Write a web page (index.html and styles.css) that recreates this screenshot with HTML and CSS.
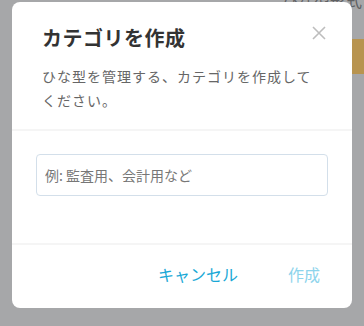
FILE: index.html
```html
<!DOCTYPE html>
<html lang="ja">
<head>
<meta charset="utf-8">
<link rel="stylesheet" href="styles.css">
</head>
<body>
<div class="backdrop">
  <span class="bg-text">ひな型形式</span>
  <div class="bg-button"></div>
  <div class="modal">
    <div class="modal-header">
      <h2 class="modal-title">カテゴリを作成</h2>
      <p class="modal-desc">ひな型を管理する、カテゴリを作成してください。</p>
      <button class="close-btn" aria-label="閉じる">
        <svg width="14" height="14" viewBox="0 0 14 14"><path d="M1 1L13 13M13 1L1 13" stroke="#bdbdbd" stroke-width="1.6" fill="none"/></svg>
      </button>
    </div>
    <div class="modal-body">
      <input class="text-input" type="text" placeholder="例: 監査用、会計用など">
    </div>
    <div class="modal-footer">
      <button class="btn btn-cancel">キャンセル</button>
      <button class="btn btn-create">作成</button>
    </div>
  </div>
</div>
</body>
</html>
```
FILE: styles.css
```css
html, body {
  margin: 0;
  padding: 0;
}
body {
  width: 364px;
  height: 326px;
  overflow: hidden;
  background: #a6a7a9;
  font-family: "Noto Sans CJK JP", "Noto Sans", sans-serif;
}
.backdrop {
  position: relative;
  width: 364px;
  height: 326px;
  padding-top: 2px;
  box-sizing: border-box;
}
.bg-text {
  position: absolute;
  right: 2px;
  top: -12px;
  font-size: 16px;
  color: #5f6062;
}
.bg-button {
  position: absolute;
  left: 352px;
  top: 39px;
  width: 20px;
  height: 35px;
  background: #b8944f;
}
.modal {
  position: relative;
  margin: 0 12px;
  width: 340px;
  height: 306px;
  background: #fff;
  border-radius: 8px;
  display: flex;
  flex-direction: column;
}
.modal-header {
  position: relative;
  padding: 22px 30px 17px;
  border-bottom: 2px solid #f5f5f5;
}
.modal-title {
  margin: 0;
  font-size: 20px;
  line-height: 28px;
  font-weight: 700;
  color: #333;
  letter-spacing: 0.5px;
}
.modal-desc {
  margin: 12px 0 0;
  font-size: 14px;
  line-height: 24px;
  color: #666;
  letter-spacing: 1px;
}
.close-btn {
  position: absolute;
  top: 24px;
  right: 26px;
  width: 14px;
  height: 14px;
  padding: 0;
  border: 0;
  background: none;
  display: flex;
}
.modal-body {
  padding: 23px 24px 47px;
  border-bottom: 2px solid #f5f5f5;
}
.text-input {
  display: block;
  width: 100%;
  height: 42px;
  box-sizing: border-box;
  border: 1px solid #d3dfea;
  border-radius: 4px;
  padding: 0 8px;
  font-family: inherit;
  font-size: 14px;
  color: #333;
  outline: none;
}
.text-input::placeholder {
  color: #777;
}
.modal-footer {
  display: flex;
  justify-content: flex-end;
  gap: 50px;
  padding: 17px 32px 0;
}
.btn {
  border: 0;
  background: none;
  padding: 0;
  font-family: inherit;
  font-size: 16px;
  line-height: 24px;
}
.btn-cancel {
  color: #1aa8d6;
}
.btn-create {
  color: #8dd4ec;
}
```
